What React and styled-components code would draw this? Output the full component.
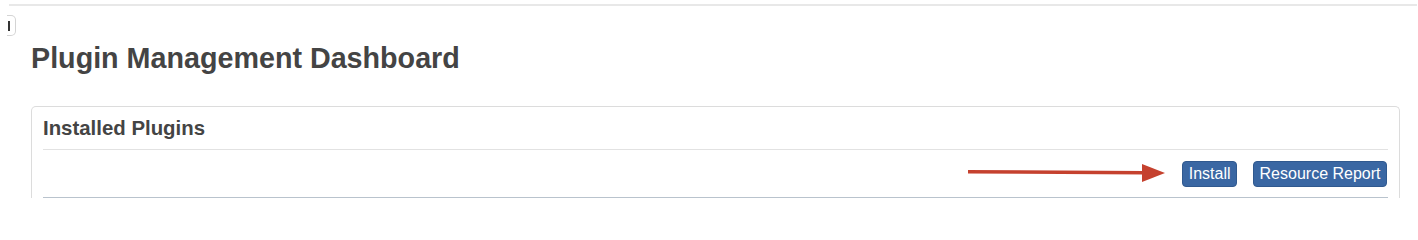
import React from "react";
import styled, { createGlobalStyle } from "styled-components";

const GlobalStyle = createGlobalStyle`
  body {
    margin: 0;
    background: #fff;
    font-family: "Liberation Sans", Arial, Helvetica, sans-serif;
    overflow: hidden;
  }
`;

const Page = styled.div`
  width: 1418px;
  height: 240px;
  overflow: hidden;
`;

const TopRule = styled.div`
  height: 2px;
  margin: 4px 1px 0 9px;
  background: #e8e8e8;
`;

const Stub = styled.div`
  width: 8px;
  height: 19px;
  margin: 9px 0 0 7px;
  border: 1px solid #d4d4d4;
  border-left: none;
  border-radius: 0 5px 5px 0;
  display: flex;
  align-items: center;
`;

const StubBar = styled.span`
  width: 2px;
  height: 10px;
  margin-left: 1px;
  background: #333;
`;

const Heading = styled.h1`
  margin: 5px 0 0 31px;
  font-size: 28.7px;
  line-height: 34px;
  font-weight: bold;
  color: #444;
`;

const Panel = styled.section`
  width: 1345px;
  height: 91px;
  margin: 31px 0 0 31px;
  padding: 0 11px;
  border: 1px solid #dcdcdc;
  border-bottom: none;
  border-radius: 5px 5px 0 0;
  overflow: hidden;
`;

const PanelTitle = styled.h2`
  margin: 0;
  padding: 9px 0;
  font-size: 20.4px;
  line-height: 24px;
  font-weight: bold;
  color: #444;
  border-bottom: 1px solid #e2e2e2;
`;

const Toolbar = styled.div`
  height: 47px;
  display: flex;
  justify-content: flex-end;
  align-items: center;
  gap: 16px;
  padding-right: 1px;
  border-bottom: 1px solid #b9c3cd;
`;

const Arrow = styled.svg`
  display: block;
`;

const Button = styled.button`
  height: 26px;
  padding: 0 5.5px;
  border: 1px solid #30598f;
  border-radius: 4px;
  background: #3a67a3;
  color: #fff;
  font-family: "Liberation Sans", Arial, Helvetica, sans-serif;
  font-size: 16px;
  line-height: 24px;
  cursor: pointer;
`;

const App = () => {
  return (
    <Page>
      <GlobalStyle />
      <TopRule />
      <Stub>
        <StubBar />
      </Stub>
      <Heading>Plugin Management Dashboard</Heading>
      <Panel>
        <PanelTitle>Installed Plugins</PanelTitle>
        <Toolbar>
          <Arrow width="198" height="20" viewBox="0 0 198 20">
            <line x1="0" y1="7.8" x2="176" y2="8.8" stroke="#c5412e" strokeWidth="3.5" />
            <polygon points="174,0 197,9 174,18" fill="#c5412e" />
          </Arrow>
          <Button>Install</Button>
          <Button>Resource Report</Button>
        </Toolbar>
      </Panel>
    </Page>
  );
};

export default App;
